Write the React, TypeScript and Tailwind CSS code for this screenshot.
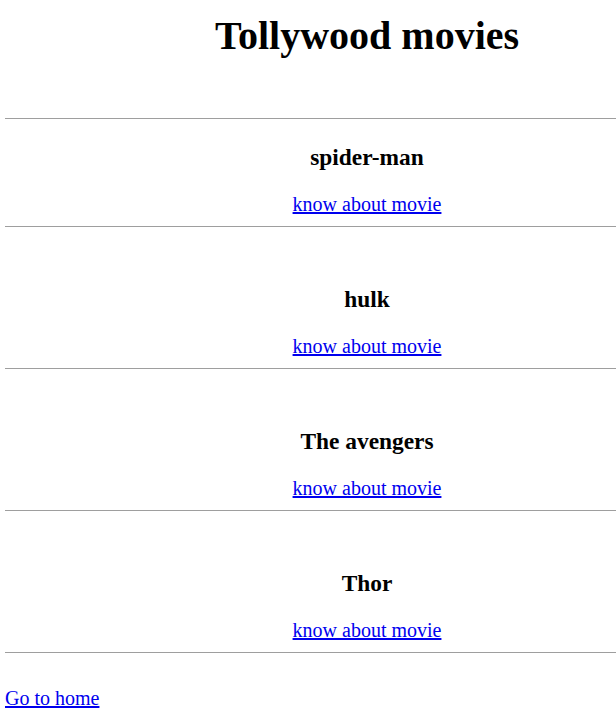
const movies = ["spider-man", "hulk", "The avengers", "Thor"]

function Rule() {
  return <div className="h-px w-full bg-[#9e9e9e]" />
}

function MovieCard({ title, first }: { title: string; first: boolean }) {
  return (
    <div className={`text-center ${first ? "pt-[25px]" : "pt-[59px]"} pb-[10px]`}>
      <h3 className="text-[23.4px] font-bold leading-[27px]">{title}</h3>
      <div className="mt-[22px] text-[20px] leading-[23px]">
        <a href="#" className="text-[#0000ee] underline">
          know about movie
        </a>
      </div>
    </div>
  )
}

export default function App() {
  return (
    <div className="w-[616px] overflow-hidden bg-white font-['Liberation_Serif',serif] text-black">
      <div className="ml-[5px] w-[724px] pt-[14px] pb-[20px]">
        <h1 className="text-center text-[40px] font-bold leading-[44px]">Tollywood movies</h1>
        <div className="mt-[60px]">
          <Rule />
          {movies.map((m, i) => (
            <div key={m}>
              <MovieCard title={m} first={i === 0} />
              <Rule />
            </div>
          ))}
        </div>
        <div className="mt-[34px] text-[20px] leading-[23px]">
          <a href="#" className="text-[#0000ee] underline">
            Go to home
          </a>
        </div>
      </div>
    </div>
  )
}
